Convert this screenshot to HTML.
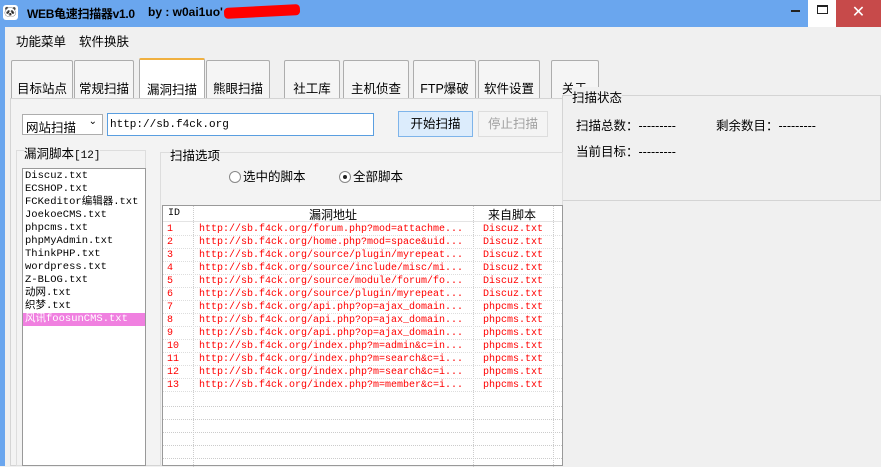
<!DOCTYPE html>
<html><head><meta charset="utf-8"><style>
*{margin:0;padding:0;box-sizing:border-box}
body{width:881px;height:466px;overflow:hidden;background:#f0f0f0;position:relative;font-family:"Liberation Sans","Noto Sans CJK SC",sans-serif;font-size:12px;color:#000}
.a{position:absolute}
.mono{font-family:"Liberation Mono","Noto Sans CJK SC",monospace;font-size:10px}
.tab{position:absolute;top:60px;height:38px;border:1px solid #adadad;border-bottom:none;background:#f5f5f5;border-radius:2px 2px 0 0;font-size:12.5px;padding-top:17px;text-align:center}
.row{position:absolute;left:0;width:399px;height:13px;color:#f00;line-height:13px;white-space:nowrap;border-bottom:1px dotted #ddd}
.row span{position:absolute}
.li{height:13px;line-height:13px;white-space:nowrap;padding-left:2px}
</style></head><body>
<!-- title -->
<div class="a" style="left:0;top:0;width:881px;height:27px;background:#6aa6ee"></div>
<div class="a" style="left:3px;top:5px;width:15px;height:15px;background:#fff;border-radius:3px;font-size:10px;line-height:15px;text-align:center">🐼</div>
<div class="a" style="left:27px;top:5px;font-size:12px;font-weight:bold;letter-spacing:-0.3px">WEB龟速扫描器v1.0</div>
<div class="a" style="left:148px;top:5px;font-size:12px;font-weight:bold">by : w0ai1uo'</div>
<div class="a" style="left:224px;top:6px;width:76px;height:11px;background:#f00;transform:rotate(-3deg);border-radius:4px"></div>
<div class="a" style="left:808px;top:0;width:28px;height:27px;background:#fff"></div>
<div class="a" style="left:836px;top:0;width:45px;height:27px;background:#c74a4a;color:#fff;font-size:16px;text-align:center;line-height:26px">✕</div>
<div class="a" style="left:791px;top:10px;width:9px;height:2px;background:#222"></div>
<div class="a" style="left:817px;top:5px;width:11px;height:9px;border:1px solid #222;border-top-width:2px"></div>
<div class="a" style="left:0;top:27px;width:5px;height:439px;background:#6aa6ee"></div>
<!-- menu -->
<div class="a" style="left:16px;top:31px;font-size:12.5px">功能菜单</div>
<div class="a" style="left:79px;top:31px;font-size:12.5px">软件换肤</div>
<!-- tabs -->
<div class="tab" style="left:11px;width:62px">目标站点</div>
<div class="tab" style="left:74px;width:60px">常规扫描</div>
<div class="tab" style="left:139px;width:66px;top:58px;height:41px;background:#fff;border-top:2px solid #f0b040;padding-top:19px">漏洞扫描</div>
<div class="tab" style="left:206px;width:64px">熊眼扫描</div>
<div class="tab" style="left:284px;width:56px">社工库</div>
<div class="tab" style="left:343px;width:66px">主机侦查</div>
<div class="tab" style="left:413px;width:63px">FTP爆破</div>
<div class="tab" style="left:478px;width:62px">软件设置</div>
<div class="tab" style="left:551px;width:48px;text-align:left;padding-left:10px">关于</div>
<!-- content panel -->
<div class="a" style="left:10px;top:98px;width:553px;height:368px;background:#f3f3f3;border:1px solid #d4d4d4"></div>
<!-- status panel -->
<div class="a" style="left:562px;top:95px;width:319px;height:106px;border:1px solid #d4d4d4;background:#f0f0f0"></div>
<div class="a" style="left:572px;top:87px;font-size:12.5px;background:#f0f0f0">扫描状态</div>
<div class="a" style="left:576px;top:115px;font-size:12.5px">扫描总数：---------</div>
<div class="a" style="left:716px;top:115px;font-size:12.5px">剩余数目：---------</div>
<div class="a" style="left:576px;top:141px;font-size:12.5px">当前目标：---------</div>
<!-- controls -->
<div class="a" style="left:22px;top:114px;width:81px;height:21px;border:1px solid #adadad;background:#fff;font-size:12.5px;padding:2px 0 0 3px">网站扫描<span style="position:absolute;right:5px;top:1px;font-size:10px">⌄</span></div>
<div class="a mono" style="left:107px;top:113px;width:267px;height:23px;border:1px solid #5a9ee0;background:#fff;padding:5px 0 0 2px;font-size:11px">http://sb.f4ck.org</div>
<div class="a" style="left:398px;top:111px;width:75px;height:26px;border:1px solid #7eb4ea;background:#dcecfc;text-align:center;line-height:24px;font-size:12.5px">开始扫描</div>
<div class="a" style="left:478px;top:111px;width:70px;height:26px;border:1px solid #ddd;background:#f4f4f4;text-align:center;line-height:24px;font-size:12.5px;color:#a0a0a0">停止扫描</div>
<!-- groups -->
<div class="a" style="left:16px;top:150px;width:130px;height:316px;border:1px solid #ddd"></div>
<div class="a" style="left:24px;top:143px;font-size:12.5px;background:#f3f3f3">漏洞脚本<span class="mono" style="font-size:11px">[12]</span></div>
<div class="a" style="left:160px;top:152px;width:403px;height:314px;border:1px solid #ddd"></div>
<div class="a" style="left:170px;top:145px;font-size:12.5px;background:#f3f3f3">扫描选项</div>
<div class="a" style="left:229px;top:171px;width:12px;height:12px;border:1px solid #888;border-radius:50%;background:#fff"></div>
<div class="a" style="left:243px;top:168px;font-size:12.5px;line-height:18px">选中的脚本</div>
<div class="a" style="left:339px;top:171px;width:12px;height:12px;border:1px solid #888;border-radius:50%;background:#fff"><div style="margin:3px;width:4px;height:4px;border-radius:50%;background:#222"></div></div>
<div class="a" style="left:353px;top:168px;font-size:12.5px;line-height:18px">全部脚本</div>
<!-- list -->
<div class="a mono" style="left:22px;top:168px;width:124px;height:298px;border:1px solid #999;background:#fff;padding-top:1px;font-size:10.5px">
<div class="li">Discuz.txt</div><div class="li">ECSHOP.txt</div><div class="li">FCKeditor编辑器.txt</div><div class="li">JoekoeCMS.txt</div><div class="li">phpcms.txt</div><div class="li">phpMyAdmin.txt</div><div class="li">ThinkPHP.txt</div><div class="li">wordpress.txt</div><div class="li">Z-BLOG.txt</div><div class="li">动网.txt</div><div class="li">织梦.txt</div><div class="li" style="background:#f080e0;color:#fff">风讯foosunCMS.txt</div>
</div>
<!-- table -->
<div class="a mono" style="left:162px;top:205px;width:401px;height:261px;border:1px solid #999;background:#fff">
<div class="a" style="left:30px;top:0;width:1px;height:261px;border-left:1px dotted #ccc"></div>
<div class="a" style="left:310px;top:0;width:1px;height:261px;border-left:1px dotted #ccc"></div>
<div class="a" style="left:390px;top:0;width:1px;height:261px;border-left:1px dotted #ccc"></div>
<div class="a" style="left:0;top:15px;width:399px;border-top:1px solid #e4e4e4"></div>
<div class="a" style="left:5px;top:2px">ID</div>
<div class="a" style="left:146px;top:0;font-family:'Noto Sans CJK SC',sans-serif;font-size:12px">漏洞地址</div>
<div class="a" style="left:325px;top:0;font-family:'Noto Sans CJK SC',sans-serif;font-size:12px">来自脚本</div>
<div class="row" style="top:17px"><span style="left:4px">1</span><span style="left:36px">http://sb.f4ck.org/forum.php?mod=attachme...</span><span style="left:320px">Discuz.txt</span></div>
<div class="row" style="top:30px"><span style="left:4px">2</span><span style="left:36px">http://sb.f4ck.org/home.php?mod=space&amp;uid...</span><span style="left:320px">Discuz.txt</span></div>
<div class="row" style="top:43px"><span style="left:4px">3</span><span style="left:36px">http://sb.f4ck.org/source/plugin/myrepeat...</span><span style="left:320px">Discuz.txt</span></div>
<div class="row" style="top:56px"><span style="left:4px">4</span><span style="left:36px">http://sb.f4ck.org/source/include/misc/mi...</span><span style="left:320px">Discuz.txt</span></div>
<div class="row" style="top:69px"><span style="left:4px">5</span><span style="left:36px">http://sb.f4ck.org/source/module/forum/fo...</span><span style="left:320px">Discuz.txt</span></div>
<div class="row" style="top:82px"><span style="left:4px">6</span><span style="left:36px">http://sb.f4ck.org/source/plugin/myrepeat...</span><span style="left:320px">Discuz.txt</span></div>
<div class="row" style="top:95px"><span style="left:4px">7</span><span style="left:36px">http://sb.f4ck.org/api.php?op=ajax_domain...</span><span style="left:320px">phpcms.txt</span></div>
<div class="row" style="top:108px"><span style="left:4px">8</span><span style="left:36px">http://sb.f4ck.org/api.php?op=ajax_domain...</span><span style="left:320px">phpcms.txt</span></div>
<div class="row" style="top:121px"><span style="left:4px">9</span><span style="left:36px">http://sb.f4ck.org/api.php?op=ajax_domain...</span><span style="left:320px">phpcms.txt</span></div>
<div class="row" style="top:134px"><span style="left:4px">10</span><span style="left:36px">http://sb.f4ck.org/index.php?m=admin&amp;c=in...</span><span style="left:320px">phpcms.txt</span></div>
<div class="row" style="top:147px"><span style="left:4px">11</span><span style="left:36px">http://sb.f4ck.org/index.php?m=search&amp;c=i...</span><span style="left:320px">phpcms.txt</span></div>
<div class="row" style="top:160px"><span style="left:4px">12</span><span style="left:36px">http://sb.f4ck.org/index.php?m=search&amp;c=i...</span><span style="left:320px">phpcms.txt</span></div>
<div class="row" style="top:173px"><span style="left:4px">13</span><span style="left:36px">http://sb.f4ck.org/index.php?m=member&amp;c=i...</span><span style="left:320px">phpcms.txt</span></div>
<div class="a" style="left:0;top:200px;width:399px;border-top:1px dotted #ccc"></div>
<div class="a" style="left:0;top:213px;width:399px;border-top:1px dotted #ccc"></div>
<div class="a" style="left:0;top:226px;width:399px;border-top:1px dotted #ccc"></div>
<div class="a" style="left:0;top:239px;width:399px;border-top:1px dotted #ccc"></div>
<div class="a" style="left:0;top:252px;width:399px;border-top:1px dotted #ccc"></div>
</div>
</body></html>
